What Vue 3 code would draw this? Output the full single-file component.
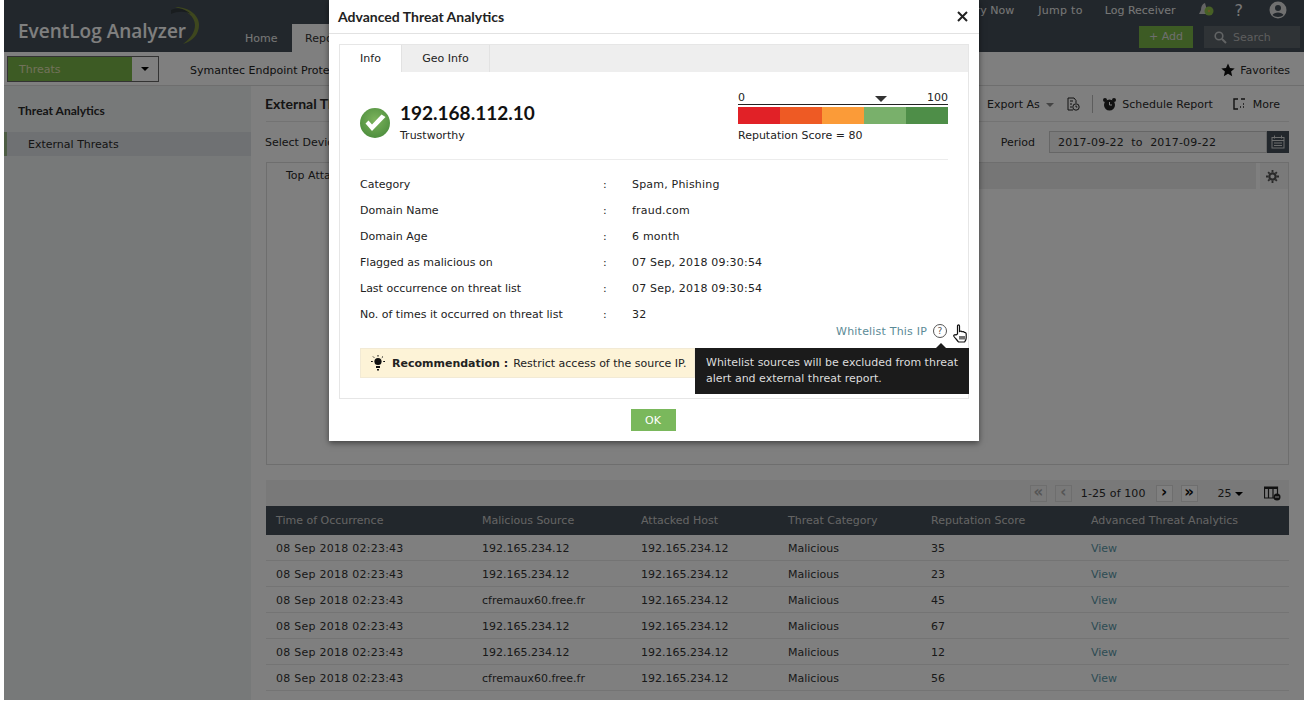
<template>
  <div class="app">
    <header class="topbar">
      <div class="logo">
        <span>EventLog Analyzer</span>
        <svg class="logo-arc" width="34" height="40" viewBox="0 0 34 40">
          <path d="M6 2 C22 2 30 12 30 20 C30 29 24 36 14 39 C22 33 26 27 26 20 C26 12 18 5 6 2Z" fill="#7d8f3c" />
          <path d="M2 5 C10 2 16 4 22 9 C16 6 9 6 2 9Z" fill="#333a3f" />
        </svg>
      </div>
      <nav class="tabs">
        <span class="tab">Home</span>
        <span class="tab active">Reports</span>
      </nav>
      <div class="top-right">
        <div class="links">
          <span class="try">Try Now</span>
          <span class="jump">Jump to</span>
          <span class="receiver">Log Receiver</span>
          <svg class="bell" width="18" height="18" viewBox="0 0 18 18">
            <path d="M7 2 C4 3 3 6 3 9 L1 13 L10 13 Z" fill="#c8c8c8" />
            <circle cx="11" cy="10" r="4.5" fill="#8fc04a" />
            <circle cx="11" cy="10" r="1.2" fill="#d8a84a" />
          </svg>
          <span class="help">?</span>
          <svg class="user" width="18" height="18" viewBox="0 0 18 18">
            <circle cx="9" cy="9" r="8.5" fill="#e0e0e0" />
            <circle cx="9" cy="7" r="3" fill="#454f58" />
            <path d="M3.5 14 C5 10.5 13 10.5 14.5 14 C12 16.5 6 16.5 3.5 14Z" fill="#454f58" />
          </svg>
        </div>
        <div class="actions">
          <span class="add-btn">+ Add</span>
          <span class="search-box">
            <svg width="13" height="13" viewBox="0 0 13 13">
              <circle cx="5" cy="5" r="3.8" fill="none" stroke="#c4c8ca" stroke-width="1.6" />
              <path d="M8 8 L12 12" stroke="#c4c8ca" stroke-width="2" />
            </svg>
            Search
          </span>
        </div>
      </div>
    </header>

    <div class="subbar">
      <div class="threat-select">
        <span class="threat-label">Threats</span>
        <span class="threat-caret"><i class="caret"></i></span>
      </div>
      <span class="device">Symantec Endpoint Protection</span>
      <span class="favorites">
        <svg width="14" height="14" viewBox="0 0 14 14">
          <path d="M7 .5 L9 5 L13.7 5.4 L10.1 8.5 L11.2 13.3 L7 10.7 L2.8 13.3 L3.9 8.5 L.3 5.4 L5 5Z" fill="#111" />
        </svg>
        Favorites
      </span>
    </div>

    <div class="body">
      <aside class="sidebar">
        <h3>Threat Analytics</h3>
        <div class="side-item">External Threats</div>
      </aside>
      <main class="main">
        <div class="title-row">
          <h2>External Threats</h2>
          <div class="tools">
            <span class="export">Export As <i class="caret small"></i></span>
            <svg class="doc" width="14" height="14" viewBox="0 0 14 14" fill="none" stroke="#222" stroke-width="1">
              <path d="M8 1 H2 V13 H7 M8 1 L10 3.5 V6 M4 4 H7 M4 7 H6 M4 10 H6" />
              <circle cx="10" cy="10" r="3.2" />
              <path d="M10 8.5 V10 H11.3" />
            </svg>
            <span class="sep"></span>
            <svg class="clock" width="15" height="15" viewBox="0 0 15 15">
              <circle cx="7.5" cy="8" r="5.5" fill="#222" />
              <circle cx="3" cy="3" r="2" fill="#222" />
              <circle cx="12" cy="3" r="2" fill="#222" />
              <path d="M7.5 5 V8 H10" stroke="#fff" stroke-width="1" fill="none" />
            </svg>
            <span>Schedule Report</span>
            <svg class="more-ic" width="13" height="12" viewBox="0 0 13 12" fill="none" stroke="#222" stroke-width="1.4">
              <path d="M5 1 H1 V11 H5 M8 1 H12 M7 9 H8 M10 9 H11 M10 6 H11" />
            </svg>
            <span>More</span>
          </div>
        </div>
        <div class="filter-row">
          <span class="select-label">Select Device</span>
          <div class="period">
            <span>Period</span>
            <span class="date-input">2017-09-22&nbsp; to &nbsp;2017-09-22</span>
            <span class="cal-btn">
              <svg width="14" height="14" viewBox="0 0 14 14" fill="none" stroke="#d8dadb">
                <rect x="1" y="2.5" width="12" height="10.5" />
                <path d="M1 5.5 H13 M3.5 .5 V3.5 M10.5 .5 V3.5 M3 8 H11 M3 10.5 H11" />
              </svg>
            </span>
          </div>
        </div>
        <section class="chart">
          <div class="chart-head">
            <span class="chart-tab">Top Attackers</span>
            <span class="gear">
              <svg width="13" height="13" viewBox="0 0 14 14">
                <circle cx="7" cy="7" r="3.4" fill="none" stroke="#555" stroke-width="2.4" />
                <path d="M6 0 H8 V2.5 H6Z M6 11.5 H8 V14 H6Z M0 6 H2.5 V8 H0Z M11.5 6 H14 V8 H11.5Z M1.6 3 L3 1.6 L4.6 3.2 L3.2 4.6Z M11 1.6 L12.4 3 L10.8 4.6 L9.4 3.2Z M1.6 11 L3.2 9.4 L4.6 10.8 L3 12.4Z M10.8 9.4 L12.4 11 L11 12.4 L9.4 10.8Z" fill="#555" />
              </svg>
            </span>
          </div>
        </section>
        <div class="pager">
          <span class="pg-btn off">«</span>
          <span class="pg-btn off">‹</span>
          <span class="pg-count">1-25 of 100</span>
          <span class="pg-btn">›</span>
          <span class="pg-btn">»</span>
          <span class="pg-size">25 <i class="caret small dark"></i></span>
          <svg class="cols-ic" width="17" height="15" viewBox="0 0 17 15">
            <path d="M.5 1 H13.5 V12 H.5Z M4.5 1 V12 M9 1 V12" fill="none" stroke="#222" stroke-width="1.2" />
            <path d="M.5 1 H13.5 V3 H.5Z" fill="#222" />
            <circle cx="13" cy="11" r="3.5" fill="#222" />
            <path d="M11 11 H15" stroke="#fff" />
          </svg>
        </div>
        <table class="grid">
          <thead>
            <tr>
              <th v-for="col in columns" :key="col">{{ col }}</th>
            </tr>
          </thead>
          <tbody>
            <tr v-for="(row, index) in rows" :key="index">
              <td class="time">08 Sep 2018 02:23:43</td>
              <td>{{ row.source }}</td>
              <td>192.165.234.12</td>
              <td>Malicious</td>
              <td>{{ row.score }}</td>
              <td class="view">View</td>
            </tr>
          </tbody>
        </table>
      </main>
    </div>

    <div class="backdrop"></div>

    <div class="modal">
      <div class="modal-head">
        <span>Advanced Threat Analytics</span>
        <svg width="11" height="11" viewBox="0 0 11 11">
          <path d="M1 1 L10 10 M10 1 L1 10" stroke="#222" stroke-width="2" />
        </svg>
      </div>
      <div class="panel">
        <div class="panel-tabs">
          <span class="ptab on">Info</span>
          <span class="ptab">Geo Info</span>
        </div>
        <div class="panel-body">
          <div class="summary">
            <svg class="ok-ic" width="30" height="30" viewBox="0 0 30 30">
              <defs>
                <radialGradient id="okFill" cx="50%" cy="40%" r="60%">
                  <stop offset="0%" stop-color="#7cb35c" />
                  <stop offset="100%" stop-color="#4f8f3f" />
                </radialGradient>
              </defs>
              <circle cx="15" cy="15" r="15" fill="url(#okFill)" />
              <path d="M5.5 15.5 L12 23 L25.5 9 L21.5 6.5 L12 16.5 L8.5 12.5Z" fill="#fff" />
            </svg>
            <div class="ip-block">
              <div class="ip">192.168.112.10</div>
              <div class="trust">Trustworthy</div>
            </div>
            <div class="score">
              <div class="scale">
                <span>0</span>
                <i class="pointer"></i>
                <span>100</span>
              </div>
              <div class="bar">
                <span v-for="c in barColors" :key="c" :style="{ background: c }"></span>
              </div>
              <div class="score-text">Reputation Score = 80</div>
            </div>
          </div>
          <dl class="facts">
            <div v-for="fact in facts" :key="fact.label" class="fact">
              <dt>{{ fact.label }}</dt>
              <span class="colon">:</span>
              <dd>{{ fact.value }}</dd>
            </div>
          </dl>
          <div class="whitelist">
            <span>Whitelist This IP</span>
            <span class="q-ic">?</span>
            <svg class="hand" width="14" height="19" viewBox="0 0 14 19">
              <path d="M4.5 10 V2 C4.5 .6 6.5 .6 6.5 2 V7.5 C7.5 7 8.5 7 9 7.8 C10 7.3 11 7.6 11.3 8.4 C12.3 8.2 13.2 8.8 13.2 10 V14 C13.2 16 12.2 17 11.5 18 H5.5 C4.5 16.5 2.5 14.5 1 12.5 C.2 11.3 1.8 10 3 11 Z" fill="#fff" stroke="#111" stroke-width="1.2" />
              <path d="M7 12 V15.5 M9 12 V15.5 M11 12 V15.5" stroke="#111" stroke-width="1.2" />
            </svg>
          </div>
          <div class="recommend">
            <svg width="14" height="16" viewBox="0 0 14 16">
              <circle cx="7" cy="6.5" r="3.6" fill="#111" />
              <path d="M5 11 H9 V13 H5Z M6 14 H8 V15.5 H6Z" fill="#111" />
              <path d="M7 0 V1.6 M0 6.5 H1.8 M12.2 6.5 H14 M2 1.5 L3.2 2.7 M12 1.5 L10.8 2.7" stroke="#111" />
            </svg>
            <b>Recommendation :</b>
            <span>Restrict access of the source IP.</span>
          </div>
          <div class="tooltip">
            Whitelist sources will be excluded from threat alert and external threat report.
          </div>
        </div>
      </div>
      <div class="modal-foot">
        <button class="ok-btn">OK</button>
      </div>
    </div>
  </div>
</template>

<script setup>
const columns = [
  "Time of Occurrence",
  "Malicious Source",
  "Attacked Host",
  "Threat Category",
  "Reputation Score",
  "Advanced Threat Analytics",
];
const rows = [
  { source: "192.165.234.12", score: 35 },
  { source: "192.165.234.12", score: 23 },
  { source: "cfremaux60.free.fr", score: 45 },
  { source: "192.165.234.12", score: 67 },
  { source: "192.165.234.12", score: 12 },
  { source: "cfremaux60.free.fr", score: 56 },
];
const facts = [
  { label: "Category", value: "Spam, Phishing" },
  { label: "Domain Name", value: "fraud.com" },
  { label: "Domain Age", value: "6 month" },
  { label: "Flagged as malicious on", value: "07 Sep, 2018 09:30:54" },
  { label: "Last occurrence on threat list", value: "07 Sep, 2018 09:30:54" },
  { label: "No. of times it occurred on threat list", value: "32" },
];
const barColors = ["#e12127", "#ee5a24", "#fb9b38", "#79b06b", "#4e8e48"];
</script>

<style>
body {
  background: #fff;
}
</style>

<style scoped>
.app {
  position: relative;
  width: 1300px;
  height: 700px;
  margin-left: 4px;
  overflow: hidden;
  background: #fff;
  color: #2a2a2a;
  font-family: "DejaVu Sans", Verdana, sans-serif;
  font-size: 11px;
}

/* dims everything behind the dialog */
.backdrop {
  position: absolute;
  inset: 0;
  background: rgba(0, 0, 0, 0.5);
}

.topbar {
  display: flex;
  height: 52px;
  background: #454f58;
}
.logo {
  display: flex;
  align-items: center;
  width: 241px;
  padding: 9px 0 0 14px;
  box-sizing: border-box;
  position: relative;
  font-family: "Open Sans", sans-serif;
  font-size: 19px;
  font-weight: 600;
  color: #fff;
  white-space: nowrap;
}
.logo-arc {
  position: absolute;
  left: 165px;
  top: 5px;
}
.tabs {
  display: flex;
  align-items: flex-end;
}
.tab {
  padding: 0 0 7px;
  width: 47px;
  font-size: 11px;
  color: #eee;
}
.tab.active {
  width: 100px;
  height: 28px;
  box-sizing: border-box;
  padding: 8px 0 0 13px;
  background: #fff;
  color: #333;
}
.top-right {
  flex: 1;
  display: flex;
  flex-direction: column;
  align-items: flex-end;
}
.links {
  display: flex;
  align-items: center;
  height: 20px;
  padding-right: 17px;
  color: #eee;
}
.try {
  margin-right: 24px;
}
.jump {
  margin-right: 22px;
  letter-spacing: 0.3px;
}
.receiver {
  margin-right: 22px;
}
.bell {
  margin-right: 19px;
}
.help {
  font-size: 16px;
  margin-right: 26px;
}
.actions {
  display: flex;
  gap: 11px;
  padding: 6px 4px 0 0;
}
.add-btn {
  width: 54px;
  height: 22px;
  line-height: 22px;
  text-align: center;
  background: #7ab648;
  color: #ddd;
}
.search-box {
  display: flex;
  align-items: center;
  gap: 6px;
  width: 96px;
  height: 22px;
  box-sizing: border-box;
  padding-left: 10px;
  background: #5e666c;
  color: #bbb;
}

.subbar {
  display: flex;
  align-items: center;
  height: 34px;
  padding: 0 14px 0 3px;
  border-bottom: 1px solid #ddd;
  box-sizing: border-box;
}
.threat-select {
  display: flex;
  width: 152px;
  height: 26px;
  border: 1px solid #666;
  box-sizing: border-box;
}
.threat-label {
  width: 124px;
  line-height: 25px;
  padding-left: 11px;
  box-sizing: border-box;
  background: #7ab648;
  color: #e3e3b5;
}
.threat-caret {
  flex: 1;
  display: flex;
  align-items: center;
  justify-content: center;
  background: #fff;
}
.caret {
  display: inline-block;
  border-left: 4px solid transparent;
  border-right: 4px solid transparent;
  border-top: 4px solid #000;
}
.caret.small {
  border-top-color: #888;
  vertical-align: middle;
  margin-left: 3px;
}
.caret.small.dark {
  border-top-color: #000;
  margin-left: 0;
}
.device {
  margin: 3px 0 0 31px;
  color: #222;
}
.favorites {
  margin: 3px 0 0 auto;
  display: flex;
  align-items: center;
  gap: 5px;
}

.body {
  display: flex;
  height: 614px;
}
.sidebar {
  width: 247px;
  background: #eff3f3;
  flex-shrink: 0;
}
.sidebar h3 {
  margin: 18px 0 14px 14px;
  font-family: "Lato", sans-serif;
  font-size: 12px;
  font-weight: 700;
  line-height: 14px;
}
.side-item {
  height: 24px;
  line-height: 26px;
  padding-left: 21px;
  background: #dfe3e6;
  border-left: 3px solid #9dbb8a;
  box-sizing: border-box;
}
.main {
  flex: 1;
  padding: 0 15px;
  min-width: 0;
}
.title-row {
  display: flex;
  align-items: center;
  justify-content: space-between;
  height: 36px;
  border-bottom: 1px solid #e6e6e6;
  box-sizing: border-box;
}
.title-row h2 {
  margin: 0 0 0 -1px;
  font-family: "Lato", sans-serif;
  font-size: 14px;
  font-weight: 700;
}
.select-label {
  margin-left: -1px;
}
.tools {
  display: flex;
  align-items: center;
  gap: 6px;
  padding: 1px 9px 0 0;
}
.doc {
  margin-left: 6px;
}
.sep {
  width: 1px;
  height: 18px;
  background: #bbb;
  margin: 0 3px 0 6px;
}
.clock {
  margin-right: -1px;
}
.more-ic {
  margin: 0 1px 0 14px;
}
.filter-row {
  display: flex;
  align-items: center;
  justify-content: space-between;
  height: 40px;
}
.period {
  display: flex;
  align-items: center;
}
.date-input {
  width: 218px;
  height: 22px;
  line-height: 21px;
  margin-left: 14px;
  padding-left: 8px;
  box-sizing: border-box;
  border: 1px solid #ccc;
  background: #f4f4f4;
  letter-spacing: 0.2px;
}
.cal-btn {
  display: flex;
  align-items: center;
  justify-content: center;
  width: 22px;
  height: 22px;
  background: #454f58;
}
.chart {
  height: 303px;
  margin-top: 0;
  border: 1px solid #ddd;
  box-sizing: border-box;
  margin-bottom: 15px;
}
.chart-head {
  display: flex;
  justify-content: space-between;
  height: 26px;
  background: #ececec;
}
.chart-tab {
  width: 120px;
  line-height: 26px;
  padding-left: 19px;
  background: #fff;
}
.gear {
  display: flex;
  align-items: center;
  justify-content: center;
  width: 32px;
  padding-right: 4px;
  background: #f4f4f4;
  border-left: 4px solid #fff;
  box-sizing: border-box;
}
.pager {
  display: flex;
  align-items: center;
  justify-content: flex-end;
  height: 26px;
  padding-right: 8px;
  background: #f2f2f2;
}
.pg-btn {
  width: 17px;
  height: 17px;
  margin-left: 8px;
  line-height: 13px;
  text-align: center;
  font-weight: 700;
  font-size: 15px;
  border: 1px solid #ddd;
  background: #fff;
  color: #111;
  box-sizing: border-box;
}
.pg-btn.off {
  color: #aaa;
  background: #f2f2f2;
}
.pg-count {
  margin: 0 2px 0 9px;
  letter-spacing: 0.1px;
}
.pg-size {
  margin: 0 21px 0 20px;
}
.grid {
  width: 100%;
  border-collapse: collapse;
  table-layout: fixed;
}
.grid th {
  height: 29px;
  padding: 0 0 0 10px;
  background: #454f58;
  color: #c9c9c9;
  font-weight: 400;
  text-align: left;
  white-space: nowrap;
}
.grid th:nth-child(1) { width: 196px; }
.grid th:nth-child(2) { width: 149px; }
.grid th:nth-child(3) { width: 137px; }
.grid th:nth-child(4) { width: 133px; }
.grid th:nth-child(5) { width: 150px; }
.grid td {
  height: 23px;
  padding: 2px 0 0 10px;
  border-bottom: 1px solid #e8e8e8;
  color: #333;
}
.grid td.time {
  letter-spacing: 0.25px;
}
.view {
  color: #5b98a8 !important;
}

.modal {
  position: absolute;
  left: 325px;
  top: 0;
  width: 650px;
  height: 441px;
  background: #fff;
  box-shadow: 0 2px 6px rgba(0, 0, 0, 0.5);
  color: #222;
}
.modal-head {
  display: flex;
  align-items: center;
  justify-content: space-between;
  height: 34px;
  padding: 0 11px 0 9px;
  box-sizing: border-box;
  border-bottom: 1px solid #e2e2e2;
  font-family: "Lato", sans-serif;
  font-size: 14px;
  font-weight: 700;
}
.panel {
  margin: 10px 10px 0;
  height: 355px;
  border: 1px solid #e6e6e6;
  box-sizing: border-box;
}
.panel-tabs {
  display: flex;
  height: 27px;
  background: #eeeeee;
}
.ptab {
  width: 88px;
  line-height: 27px;
  text-align: center;
  border-right: 1px solid #e2e2e2;
  box-sizing: border-box;
}
.ptab.on {
  width: 62px;
  background: #fff;
}
.panel-body {
  position: relative;
  padding: 0 20px;
}
.summary {
  display: flex;
  align-items: flex-start;
  height: 88px;
  padding-top: 18px;
  box-sizing: border-box;
  border-bottom: 1px solid #ececec;
}
.ok-ic {
  margin-top: 18px;
  flex-shrink: 0;
}
.ip-block {
  margin: 11px 0 0 10px;
  flex: 1;
}
.ip {
  font-family: "Lato", sans-serif;
  font-size: 19px;
  font-weight: 700;
  line-height: 24px;
  color: #111;
}
.trust {
  margin-top: 4px;
  line-height: 14px;
}
.score {
  width: 210px;
}
.scale {
  display: flex;
  justify-content: space-between;
  align-items: flex-end;
  height: 14px;
  line-height: 13px;
  border-bottom: 1px solid #222;
}
.pointer {
  margin: 0 0 2px 90px;
  border-left: 6px solid transparent;
  border-right: 6px solid transparent;
  border-top: 6px solid #333;
}
.bar {
  display: flex;
  height: 17px;
  margin-top: 2px;
}
.bar span {
  flex: 1;
}
.score-text {
  margin-top: 5px;
  line-height: 14px;
}
.facts {
  margin: 12px 0 0;
}
.fact {
  display: flex;
  height: 26px;
  line-height: 26px;
}
.fact dt {
  width: 243px;
}
.colon {
  width: 29px;
}
.fact dd {
  margin: 0;
  letter-spacing: 0.2px;
}
.whitelist {
  display: flex;
  align-items: center;
  justify-content: flex-end;
  height: 18px;
  margin: -6px 0 0;
  color: #5b8a96;
  position: relative;
  letter-spacing: 0.2px;
}
.q-ic {
  width: 12px;
  height: 12px;
  margin: 0 1px 0 6px;
  border: 1px solid #555;
  border-radius: 50%;
  line-height: 12px;
  text-align: center;
  font-size: 9px;
  color: #555;
}
.hand {
  position: absolute;
  right: -19px;
  top: 2px;
}
.recommend {
  display: flex;
  align-items: center;
  gap: 5px;
  width: 335px;
  height: 30px;
  margin-top: 8px;
  padding-left: 10px;
  box-sizing: border-box;
  background: #fdf3d7;
  border: 1px solid #f2ead5;
  white-space: nowrap;
}
.recommend b {
  margin-left: 2px;
}
.tooltip {
  position: absolute;
  right: -1px;
  top: 276px;
  width: 274px;
  height: 46px;
  padding: 7px 8px 0 11px;
  box-sizing: border-box;
  background: #1b1b1b;
  color: #ddd;
  line-height: 16px;
}
.tooltip::before {
  content: "";
  position: absolute;
  top: -5px;
  left: 240px;
  border-left: 6px solid transparent;
  border-right: 6px solid transparent;
  border-bottom: 6px solid #1b1b1b;
}
.modal-foot {
  display: flex;
  justify-content: center;
  padding: 10px 2px 0 0;
}
.ok-btn {
  width: 45px;
  height: 22px;
  border: 0;
  background: #7ab85c;
  color: #fff;
  font-family: inherit;
  font-size: 11px;
}
</style>
